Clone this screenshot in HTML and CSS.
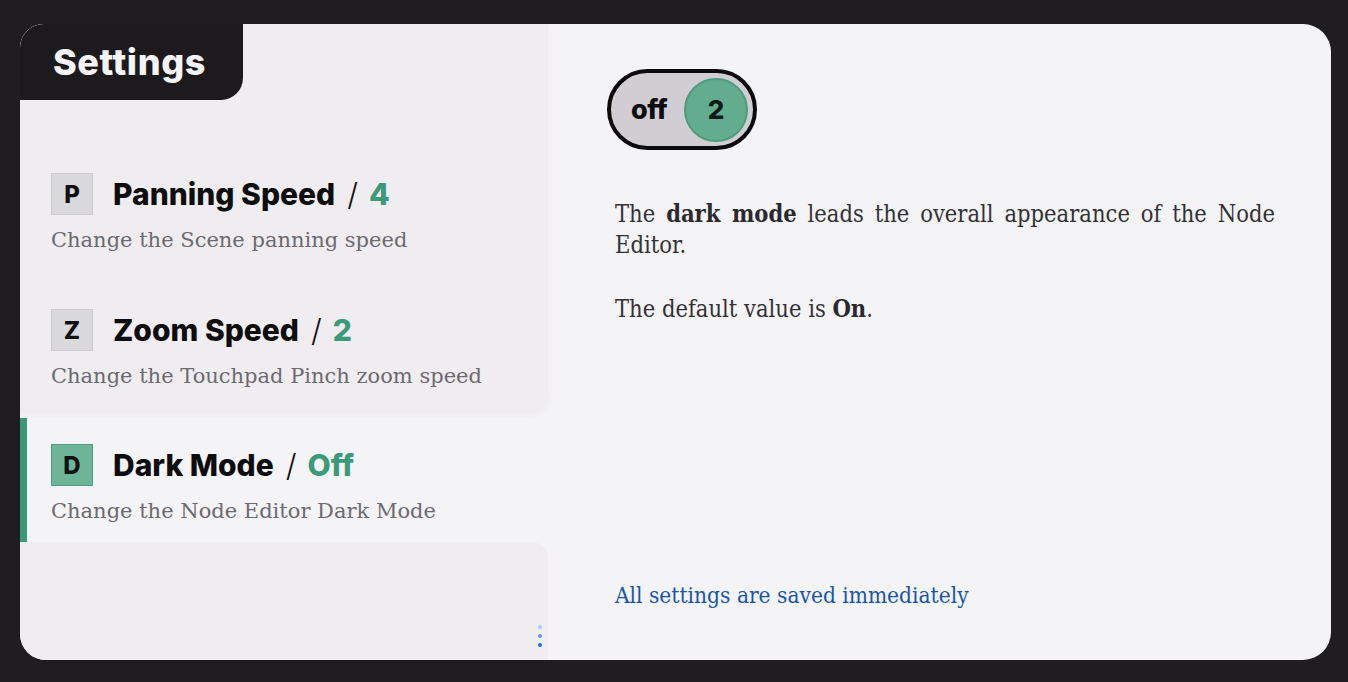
FILE: index.html
```html
<!DOCTYPE html>
<html lang="en">
<head>
<meta charset="utf-8">
<title>Settings</title>
<link rel="stylesheet" href="styles.css">
</head>
<body>
<div class="card">
  <aside class="sidebar">
    <div class="top-block">
      <div class="tab"><h1 class="tab-title">Settings</h1></div>
      <div class="item">
        <div class="item-head">
          <span class="key">P</span>
          <span class="item-name">Panning Speed</span>
          <span class="slash">/</span>
          <span class="item-value">4</span>
        </div>
        <p class="item-desc">Change the Scene panning speed</p>
      </div>
      <div class="item item-second">
        <div class="item-head">
          <span class="key">Z</span>
          <span class="item-name">Zoom Speed</span>
          <span class="slash">/</span>
          <span class="item-value">2</span>
        </div>
        <p class="item-desc">Change the Touchpad Pinch zoom speed</p>
      </div>
    </div>
    <div class="item item-active">
      <div class="item-head">
        <span class="key key-active">D</span>
        <span class="item-name">Dark Mode</span>
        <span class="slash">/</span>
        <span class="item-value">Off</span>
      </div>
      <p class="item-desc">Change the Node Editor Dark Mode</p>
    </div>
    <div class="rest-block">
      <div class="dots">
        <span class="dot dot-1"></span>
        <span class="dot dot-2"></span>
        <span class="dot dot-3"></span>
      </div>
    </div>
  </aside>
  <main class="detail">
    <div class="toggle">
      <span class="toggle-label">off</span>
      <span class="toggle-knob">2</span>
    </div>
    <div class="detail-text">
      <p>The <b>dark mode</b> leads the overall appearance of the Node Editor.</p>
      <p>The default value is <b>On</b>.</p>
    </div>
    <p class="footer-note">All settings are saved immediately</p>
  </main>
</div>
</body>
</html>
```

FILE: styles.css
```css
* { box-sizing: border-box; }

html, body {
  margin: 0;
  height: 100%;
}

body {
  background: #1f1d21;
  padding: 24px 17px 22px 20px;
  font-family: "Inter", "DejaVu Sans", sans-serif;
}

.card {
  display: flex;
  height: 636px;
  background: #f4f3f6;
  border-radius: 24px 28px 28px 26px;
  overflow: hidden;
}

.sidebar {
  width: 528px;
  flex: none;
  display: flex;
  flex-direction: column;
}

.top-block {
  background: #efedf0;
  border-bottom-right-radius: 16px;
  padding-bottom: 6px;
  box-shadow: 0 3px 6px rgba(0, 0, 0, 0.03);
}

.tab {
  width: 223px;
  height: 76px;
  background: #1c1a1d;
  border-bottom-right-radius: 22px;
  display: flex;
  align-items: center;
  padding-left: 33px;
  margin-bottom: 47px;
}

.tab-title {
  margin: 0;
  color: #f4f3f6;
  font-family: "Inter", "DejaVu Sans", sans-serif;
  font-weight: 800;
  font-size: 36px;
  letter-spacing: 0.6px;
}

.item {
  padding: 26px 20px 16px 31px;
}

.item-second { margin-top: 12px; padding-top: 26px; }
.top-block .item:first-of-type { padding-top: 0; }

.item-head {
  display: flex;
  align-items: center;
  height: 42px;
}

.key {
  width: 42px;
  height: 42px;
  flex: none;
  display: flex;
  align-items: center;
  justify-content: center;
  background: #dad9dc;
  border: 1px solid #cbcacd;
  font-weight: 800;
  font-size: 24px;
  color: #111;
  margin-right: 20px;
}

.key-active {
  background: #6db49b;
  border-color: #4e9b7f;
}

.item-name {
  font-weight: 800;
  font-size: 30px;
  color: #0d0d0e;
  letter-spacing: 0;
}

.slash {
  font-weight: 300;
  font-size: 31px;
  color: #111;
  margin: 0 11px 0 12px;
}

.item-value {
  font-weight: 800;
  font-size: 30px;
  color: #3b9a79;
}

.item-desc {
  margin: 10px 0 0;
  height: 30px;
  line-height: 30px;
  font-family: "DejaVu Serif", serif;
  font-size: 21px;
  color: #6d6a70;
  white-space: nowrap;
}

.item-active {
  margin-top: 5px;
  background: #f4f3f6;
  border-left: 7px solid #3a9a77;
  padding-left: 24px;
}

.rest-block {
  flex: 1;
  background: #efedf0;
  border-top-right-radius: 16px;
  display: flex;
  justify-content: flex-end;
  align-items: flex-end;
  padding: 0 6px 13px 0;
}

.dots {
  display: flex;
  flex-direction: column;
  gap: 5px;
}

.dot {
  width: 4px;
  height: 4px;
  border-radius: 50%;
}

.dot-1 { background: #a9c9ee; }
.dot-2 { background: #5b9ae3; }
.dot-3 { background: #1a6fdc; }

.detail {
  flex: 1;
  display: flex;
  flex-direction: column;
  padding: 45px 56px 49px 67px;
}

.toggle {
  width: 150px;
  height: 81px;
  margin-left: -8px;
  border: 4px solid #0c0c0d;
  border-radius: 41px;
  background: #d0ced2;
  display: flex;
  align-items: center;
  justify-content: space-between;
  padding: 0 5px 0 20px;
}

.toggle-label {
  font-weight: 800;
  font-size: 27px;
  color: #0d0d0e;
  letter-spacing: -0.5px;
}

.toggle-knob {
  width: 64px;
  height: 64px;
  border-radius: 50%;
  background: #62ad8f;
  border: 2px solid #4f9b7e;
  display: flex;
  align-items: center;
  justify-content: center;
  font-weight: 800;
  font-size: 26px;
  color: #0e1a14;
}

.detail-text {
  margin-top: 49px;
  font-family: "DejaVu Serif Condensed", "Liberation Serif", serif;
  font-stretch: condensed;
  font-size: 23.5px;
  line-height: 31px;
  color: #333135;
  text-align: justify;
}

.detail-text p {
  margin: 0 0 33px;
}

.detail-text b {
  font-weight: 700;
  color: #2b292d;
}

.footer-note {
  margin: auto 0 0;
  font-family: "DejaVu Serif Condensed", "Liberation Serif", serif;
  font-stretch: condensed;
  font-size: 22.5px;
  line-height: 31px;
  color: #1a56a6;
}
```
